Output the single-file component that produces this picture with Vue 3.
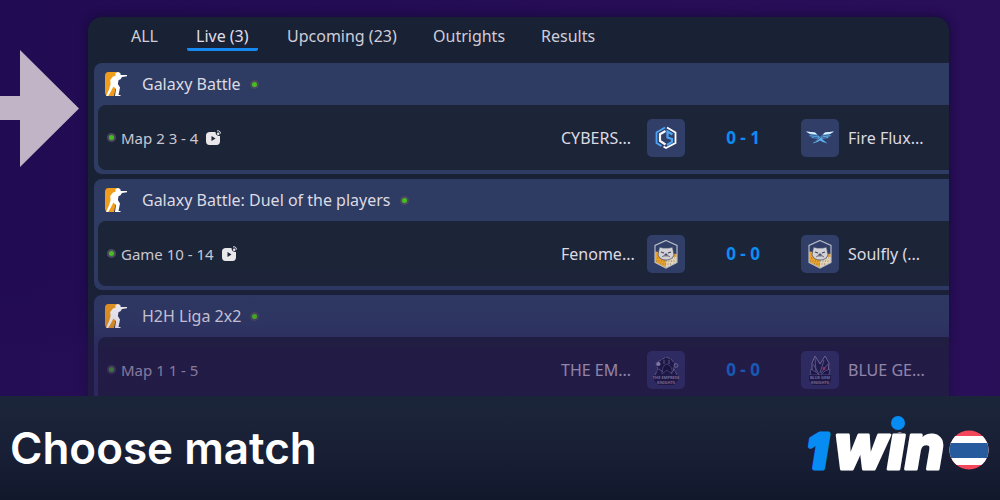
<script setup>
import { ref } from 'vue'

const tabs = ['ALL', 'Live (3)', 'Upcoming (23)', 'Outrights', 'Results']
const active = ref('Live (3)')

const crestNames = {
  knights: ['THE EMPRESS', 'KNIGHTS'],
  gem: ['BLUE GEM', 'KNIGHTS']
}

const leagues = [
  { title: 'Galaxy Battle', stage: 'Map 2 3 - 4', stream: true, home: 'CYBERS...', away: 'Fire Flux...', score: '0 - 1', homeLogo: 'cyber', awayLogo: 'wings' },
  { title: 'Galaxy Battle: Duel of the players', stage: 'Game 10 - 14', stream: true, home: 'Fenome...', away: 'Soulfly (...', score: '0 - 0', homeLogo: 'bear', awayLogo: 'bear' },
  { title: 'H2H Liga 2x2', stage: 'Map 1 1 - 5', stream: false, home: 'THE EM...', away: 'BLUE GE...', score: '0 - 0', homeLogo: 'knights', awayLogo: 'gem' }
]
</script>

<template>
  <div class="page">
    <svg class="defs" aria-hidden="true">
      <symbol id="cyber" viewBox="0 0 38 38">
        <path d="M18 8.500 9.500 13.500V24l5 3" fill="none" stroke="#4da6f5" stroke-width="1.800" />
        <path d="M20 8.500 28.500 13.500V24L19 29l-2.500-1.500" fill="none" stroke="#fff" stroke-width="1.800" />
        <path d="M18.500 12 13 15.200V22l5.500 3.500" fill="none" stroke="#f4f6fa" stroke-width="2.200" />
        <path d="M25.500 15.500 20.500 12.500V18.500L25 20V23l-5 3" fill="none" stroke="#4da6f5" stroke-width="2.200" />
      </symbol>
      <symbol id="wings" viewBox="0 0 38 38">
        <path d="M5 12.500 14 13.500 20 19 26.500 24.500 21.500 23 16 19.500 10 19 12 17.800 7.500 17 10 16Z" fill="#5aacec" />
        <path d="M33 12.500 24 13.500 18 19 11.500 24.500 16.500 23 22 19.500 28 19 26 17.800 30.500 17 28 16Z" fill="#66b5f1" />
        <path d="M5 12.500 14 13.500 16 15.500 8.500 14.500ZM33 12.500 24 13.500 22 15.500 29.500 14.500Z" fill="#e7f3fc" />
        <path d="m9 15.800 8 1.200M29 15.800l-8 1.200M12 18l5.500 1M26 18l-5.500 1M14 23l8-6.500" fill="none" stroke="#2f4168" stroke-width=".7" />
      </symbol>
      <symbol id="bear" viewBox="0 0 38 38">
        <path d="M8 16.500 30 19V27.500L19 33 8 27.500Z" fill="#e9a22c" />
        <path d="M19 22h11v5.500L19 33Z" fill="#e3d3b5" />
        <path d="M10 23h18M9 26h20M13 29h12" stroke="#6f6255" stroke-width=".8" stroke-dasharray="1 1.500" />
        <path d="M19 5.500 30 10.500V27.500L19 33 8 27.500V10.500Z" fill="none" stroke="#b8bbc4" stroke-width="1.200" />
        <path d="M12.500 12 16 13h6l3.500-1 .8 4 .7 4q-2 5-8 5t-8-5l.7-4Z" fill="#d2d2d7" stroke="#434a62" stroke-width=".7" />
        <path d="m14 17 3 1M24 17l-3 1" stroke="#42475a" stroke-width="1.300" />
        <path d="M15 22q4-4 8 0" fill="#a8a3b6" stroke="#59596d" stroke-width=".7" />
        <ellipse cx="19" cy="19.500" rx="1.500" ry="1" fill="#4a4c60" />
      </symbol>
      <symbol id="knights" viewBox="0 0 38 38">
        <path d="M8 24 11 18 9 12 14 9 19 6 24 8 28 13 26 18 30 23 26 26H12Z" fill="#161e3b" stroke="#8f94b1" stroke-width=".8" stroke-dasharray="4 1" />
        <circle cx="11.500" cy="13" r="2" fill="#c2c5dc" />
        <circle cx="29" cy="14.500" r="1.800" fill="none" stroke="#9b9fb9" />
        <path d="M15 23q0-9 5-10 6 2 5 10l-5-4Z" fill="#0e1731" stroke="#606988" stroke-width=".8" />
        <path d="M17 9v4M22 9v4M12 18l4 3M28 18l-4 4" stroke="#7c819f" />
        <path d="M7 24h24v5l-4 5H11l-4-5Z" fill="#161e3b" />
      </symbol>
      <symbol id="gem" viewBox="0 0 38 38">
        <path d="M11 23V12l3-7 5 8 5-8 4 7-1 11-6 3h-5Z" fill="#1b2548" stroke="#9b9db8" />
        <path d="m14 7 1 14M23 9l-4 13M12 13l6 10M27 13l-7 9" stroke="#8488a6" stroke-width=".9" />
        <path d="m9 24 1-6 6 4 3 3 5-5 5-2-1 6Z" fill="#11183a" stroke="#9295b1" stroke-width=".7" />
        <circle cx="23" cy="17.500" r="1.400" fill="#e14b6c" />
        <path d="M8 24h22v5l-3 5H11l-3-5Z" fill="#161e3b" />
      </symbol>
    </svg>

    <main class="stage">
      <svg class="arrow" viewBox="0 0 79 118" aria-hidden="true">
        <path d="M0 46H20V0L79 58.500 20 117V70H0Z" />
      </svg>
      <section class="panel">
        <nav class="tabs">
          <button v-for="tab in tabs" :key="tab" type="button" :class="{ active: tab === active }" @click="active = tab">{{ tab }}</button>
        </nav>
        <article v-for="league in leagues" :key="league.title" class="league">
          <header>
            <svg class="game" viewBox="0 0 24 24" aria-hidden="true">
              <path d="M3.500 0H14L9 24H3.500Q0 24 0 20V4Q0 0 3.500 0Z" fill="#f09d1c" />
              <path d="M10.500 1 13 0l2.300 1 .4 2H22v1.300l-5 .6-1.500 2.300-2 1-.6 3.800 2.100 3.500-1.500 7.500h2V24H10l1-7-2.500-2.500L5.500 20l-2.300 4H1l3-6.500 1.600-5.500-.4-4L8 4.500l2.500-.7Z" fill="#fff" />
            </svg>
            <h2>{{ league.title }}</h2>
            <i class="live"></i>
          </header>
          <div class="match">
            <div class="phase">
              <i class="live"></i>
              <span>{{ league.stage }}</span>
              <svg v-if="league.stream" class="stream" viewBox="0 0 16 16" aria-hidden="true">
                <path d="M4 2H9.500Q9.500 6 14 6v5q0 4-3.500 4H3.500q-3.500 0-3.500-4V5.500q0-3.500 4-3.500Z" />
                <path d="M5.500 6v5L9.500 8.500Z" class="play" />
                <circle cx="12.200" cy="3.800" r="1.300" />
                <path d="M11 1q3-1 3.500 2.500" class="wave" />
              </svg>
            </div>
            <span class="team">{{ league.home }}</span>
            <svg class="crest-tile" viewBox="0 0 38 38" aria-hidden="true">
              <use :href="'#' + league.homeLogo" />
              <text v-for="(line, n) in crestNames[league.homeLogo]" :key="n" x="19" :y="28 + n * 5" class="crest">{{ line }}</text>
            </svg>
            <strong>{{ league.score }}</strong>
            <svg class="crest-tile" viewBox="0 0 38 38" aria-hidden="true">
              <use :href="'#' + league.awayLogo" />
              <text v-for="(line, n) in crestNames[league.awayLogo]" :key="n" x="19" :y="28 + n * 5" class="crest">{{ line }}</text>
            </svg>
            <span class="team away">{{ league.away }}</span>
          </div>
        </article>
      </section>
      <div class="fade"></div>
    </main>

    <footer class="banner">
      <h1>Choose match</h1>
      <div class="brand">
        <svg class="wordmark" viewBox="0 0 140 60" role="img" aria-label="1win">
          <clipPath id="stems"><rect x="20" y="14" width="124" height="46" /></clipPath>
          <text x="0" y="50" class="one">1</text>
          <g clip-path="url(#stems)"><text x="27" y="51" class="win">win</text></g>
          <circle cx="91" cy="5" r="7" fill="#078cf3" />
        </svg>
        <svg class="flag" viewBox="0 0 40 40" role="img" aria-label="Thailand">
          <clipPath id="disc"><circle cx="20" cy="22" r="19.500" /></clipPath>
          <g clip-path="url(#disc)">
            <rect width="40" height="42" fill="#f5475b" />
            <rect y="8" width="40" height="29" fill="#fff" />
            <rect y="15" width="40" height="15" fill="#265b9e" />
          </g>
        </svg>
      </div>
    </footer>
  </div>
</template>

<style>
body { margin: 0; }
</style>

<style scoped>
.page {
  display: flex;
  flex-direction: column;
  height: 100vh;
  overflow: hidden;
  font-family: "Noto Sans", "Open Sans", sans-serif;
  color: #dcdae2;
}
.defs { position: absolute; width: 0; height: 0; }
.stage {
  position: relative;
  flex: 1;
  min-height: 0;
  display: grid;
  grid-template-columns: 88px minmax(0, 1fr) 51px;
  align-items: start;
  overflow: hidden;
  background: linear-gradient(90deg, #210b52, #260d55 60%, #290e59);
}
.arrow { width: 79px; height: 118px; margin-top: 50px; }
.arrow path { fill: #c1b4c6; }
.panel {
  margin-top: 17px;
  padding-left: 6px;
  background: #192235;
  border-radius: 14px 14px 0 0;
  box-shadow: 0 0 10px #140a35;
}
.tabs {
  display: grid;
  grid-template-columns: 65px 91px 146px 108px 1fr;
  padding-left: 37px;
  height: 46px;
  align-items: start;
}
.tabs button {
  justify-self: start;
  height: 34px;
  padding: 6px 9px 0;
  margin-left: -9px;
  border: 0;
  border-bottom: 3px solid transparent;
  border-radius: 2px;
  background: none;
  color: #d0cdd8;
  font: 16px/24px "Noto Sans", sans-serif;
  white-space: nowrap;
  cursor: pointer;
}
.tabs .active { border-bottom-color: #1689f0; color: #e0dee6; }
.league {
  margin-bottom: 5px;
  padding: 0 0 4px 4px;
  background: #2e3b63;
  border-radius: 8px 0 0 8px;
}
header { display: flex; align-items: center; height: 42px; padding-left: 7px; }
.game { width: 24px; height: 24px; }
h2 { margin: 0 9px 0 13px; font-size: 16px; font-weight: 400; line-height: 24px; }
.live {
  width: 5px;
  height: 5px;
  border: 2px solid #4b4a5e;
  border-radius: 50%;
  background: #47bd20;
}
.match {
  display: grid;
  grid-template-columns: minmax(0, 1fr) 86px 38px 116px 38px 110px;
  align-items: center;
  height: 65px;
  background: #1c2438;
  border-radius: 8px 0 0 8px;
  font-size: 16px;
  line-height: 24px;
}
.phase { display: flex; align-items: center; padding-left: 9px; color: #c9c7d0; font-size: 15px; }
.phase span { margin-left: 5px; }
.stream { width: 16px; height: 16px; margin-left: 8px; fill: #e9e7ea; }
.stream .play { fill: #1c2438; }
.stream .wave { fill: none; stroke: #e9e7ea; }
.team { white-space: nowrap; }
.away { padding-left: 9px; }
.crest-tile { width: 38px; height: 38px; border-radius: 5px; background: #303e68; }
.crest { fill: #a9aabd; font: 700 4px "Noto Sans", sans-serif; text-anchor: middle; }
strong { color: #0d8cf2; text-align: center; font-size: 17px; }
.fade {
  position: absolute;
  inset: 265px 0 0;
  background: linear-gradient(#2a105800, #2a105828 60px, #2a105868 85px, #2a105870);
  pointer-events: none;
}
.banner {
  display: flex;
  align-items: center;
  justify-content: space-between;
  height: 104px;
  padding: 0 11px 0 10px;
  background: linear-gradient(#1b2539, #192036 50%, #12182c);
}
h1 { margin: 0; color: #fff; font: 600 44px/56px Inter, sans-serif; }
.brand { display: flex; align-items: center; }
.wordmark { width: 140px; height: 60px; overflow: visible; }
.wordmark text { font-family: Inter, sans-serif; font-style: italic; font-weight: 800; stroke-linejoin: round; }
.wordmark .win { font-size: 62px; fill: #fff; stroke: #fff; stroke-width: 3px; }
.wordmark .one { font-size: 46px; fill: #078cf3; stroke: #078cf3; stroke-width: 5px; }
.flag { width: 40px; height: 40px; margin-left: 2px; overflow: visible; }
</style>
